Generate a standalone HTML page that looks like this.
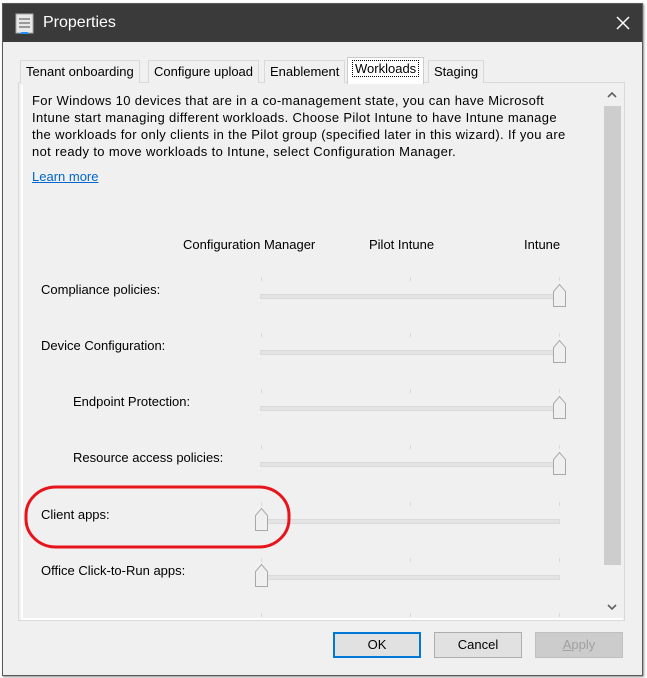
<!DOCTYPE html><html><head><style>
body{margin:0;width:647px;height:678px;background:#fff;position:relative;overflow:hidden;font-family:"Liberation Sans",sans-serif;font-size:13px;color:#000}
.a{position:absolute}
.win{left:2px;top:3px;width:639px;height:671px;border:1px solid #5a5a5a;background:#f0f0f0;box-shadow:1px 1px 2px #888}
.title{left:0;top:0;width:639px;height:38px;background:#3a3a3a;color:#fff;font-size:15px}
.tab{top:60px;height:22px;line-height:22px;border:1px solid #d9d9d9;border-bottom:none;background:#f0f0f0;padding:0 5px;font-size:13px}
.lbl{font-size:13px}
.track{height:3px;background:#e4e4e4;border:1px solid #dadada;width:298px;left:260px}
.btn{top:632px;height:24px;width:86px;border:1px solid #adadad;background:#e1e1e1;text-align:center;line-height:24px;font-size:13px}
</style></head><body>
<div class="a win">
 <div class="a title">
  <svg class="a" style="left:12px;top:9px" width="20" height="22"><rect x="1" y="1" width="17" height="19" fill="#e8e8e8" stroke="#aaa"/><rect x="4" y="5" width="11" height="2" fill="#999"/><rect x="4" y="9" width="11" height="2" fill="#999"/><rect x="4" y="13" width="11" height="2" fill="#999"/><rect x="6" y="19" width="7" height="2" fill="#1e90ff"/></svg>
  <div class="a" style="left:40px;top:10px;font-size:16px">Properties</div>
  <svg class="a" style="left:613px;top:12px" width="14" height="14"><path d="M1 1L13 13M13 1L1 13" stroke="#fff" stroke-width="1.5"/></svg>
 </div>
</div>
<div class="a" style="left:18px;top:82px;width:605px;height:537px;border:1px solid #d9d9d9;background:#f0f0f0"></div>
<div class="a" style="left:21px;top:85px;width:600px;height:533px;border-left:2px solid #fff;border-bottom:2px solid #fff"></div>
<div class="a tab" style="left:20px">Tenant onboarding</div>
<div class="a tab" style="left:148px">Configure upload</div>
<div class="a tab" style="left:264px">Enablement</div>
<div class="a tab" style="left:347px;top:57px;height:26px;background:#fff;border-color:#ccc"><span style="outline:1px dotted #000;padding:0 2px">Workloads</span></div>
<div class="a tab" style="left:428px">Staging</div>
<div class="a" style="left:603px;top:86px;width:18px;height:530px;background:#f0f0f0"></div>
<div class="a" style="left:604px;top:106px;width:17px;height:459px;background:#cdcdcd"></div>
<svg class="a" style="left:607px;top:91px" width="10" height="8"><path d="M1 6L5 2L9 6" stroke="#606060" stroke-width="1.6" fill="none"/></svg>
<svg class="a" style="left:607px;top:603px" width="10" height="8"><path d="M1 2L5 6L9 2" stroke="#606060" stroke-width="1.6" fill="none"/></svg>
<div class="a" style="left:32px;top:92px;line-height:17px;white-space:nowrap;font-size:13px;letter-spacing:0.35px">For Windows 10 devices that are in a co-management state, you can have Microsoft<br>Intune start managing different workloads. Choose Pilot Intune to have Intune manage<br>the workloads for only clients in the Pilot group (specified later in this wizard). If you are<br>not ready to move workloads to Intune, select Configuration Manager.</div>
<div class="a" style="left:32px;top:169px;color:#0066cc;text-decoration:underline">Learn more</div>
<div class="a" style="left:183px;top:237px">Configuration Manager</div>
<div class="a" style="left:369px;top:237px">Pilot Intune</div>
<div class="a" style="left:524px;top:237px">Intune</div>

<div class="a lbl" style="left:41px;top:282px">Compliance policies:</div>
<div class="a lbl" style="left:41px;top:338px">Device Configuration:</div>
<div class="a lbl" style="left:73px;top:394px">Endpoint Protection:</div>
<div class="a lbl" style="left:73px;top:450px">Resource access policies:</div>
<div class="a lbl" style="left:41px;top:507px">Client apps:</div>
<div class="a lbl" style="left:41px;top:563px">Office Click-to-Run apps:</div>

<svg class="a" style="left:0;top:0" width="647" height="678">
<g stroke="#dadada">
<path d="M261.5 277V281M410.5 277V281M559.5 277V281"/>
<path d="M261.5 333V337M410.5 333V337M559.5 333V337"/>
<path d="M261.5 389V393M410.5 389V393M559.5 389V393"/>
<path d="M261.5 445V449M410.5 445V449M559.5 445V449"/>
<path d="M261.5 502V506M410.5 502V506M559.5 502V506"/>
<path d="M261.5 558V562M410.5 558V562M559.5 558V562"/>
<path d="M261.5 613V617M410.5 613V617M559.5 613V617"/>
</g>
</svg>
<div class="a track" style="top:294px;width:292px"></div>
<div class="a track" style="top:350px;width:292px"></div>
<div class="a track" style="top:406px;width:292px"></div>
<div class="a track" style="top:462px;width:292px"></div>
<div class="a track" style="top:519px"></div>
<div class="a track" style="top:575px"></div>
<svg class="a" style="left:0;top:0" width="647" height="678">
<g fill="#f0f0f0" stroke="#a8a8a8">
<path d="M553.5 306.5V291.5L559.5 284.5L565.5 291.5V306.5Z"/>
<path d="M553.5 362.5V347.5L559.5 340.5L565.5 347.5V362.5Z"/>
<path d="M553.5 418.5V403.5L559.5 396.5L565.5 403.5V418.5Z"/>
<path d="M553.5 474.5V459.5L559.5 452.5L565.5 459.5V474.5Z"/>
<path d="M255.5 530.5V515.5L261.5 508.5L267.5 515.5V530.5Z"/>
<path d="M255.5 586.5V571.5L261.5 564.5L267.5 571.5V586.5Z"/>
</g>
<rect x="26" y="487" width="263" height="60" rx="30" ry="28" fill="none" stroke="#e8141c" stroke-width="3"/>
</svg>

<div class="a btn" style="left:333px;border:1px solid #0078d7;box-shadow:inset 0 0 0 1px #0078d7">OK</div>
<div class="a btn" style="left:434px">Cancel</div>
<div class="a btn" style="left:535px;background:#cccccc;border-color:#bfbfbf;color:#a0a0a0"><u>A</u>pply</div>
</body></html>
